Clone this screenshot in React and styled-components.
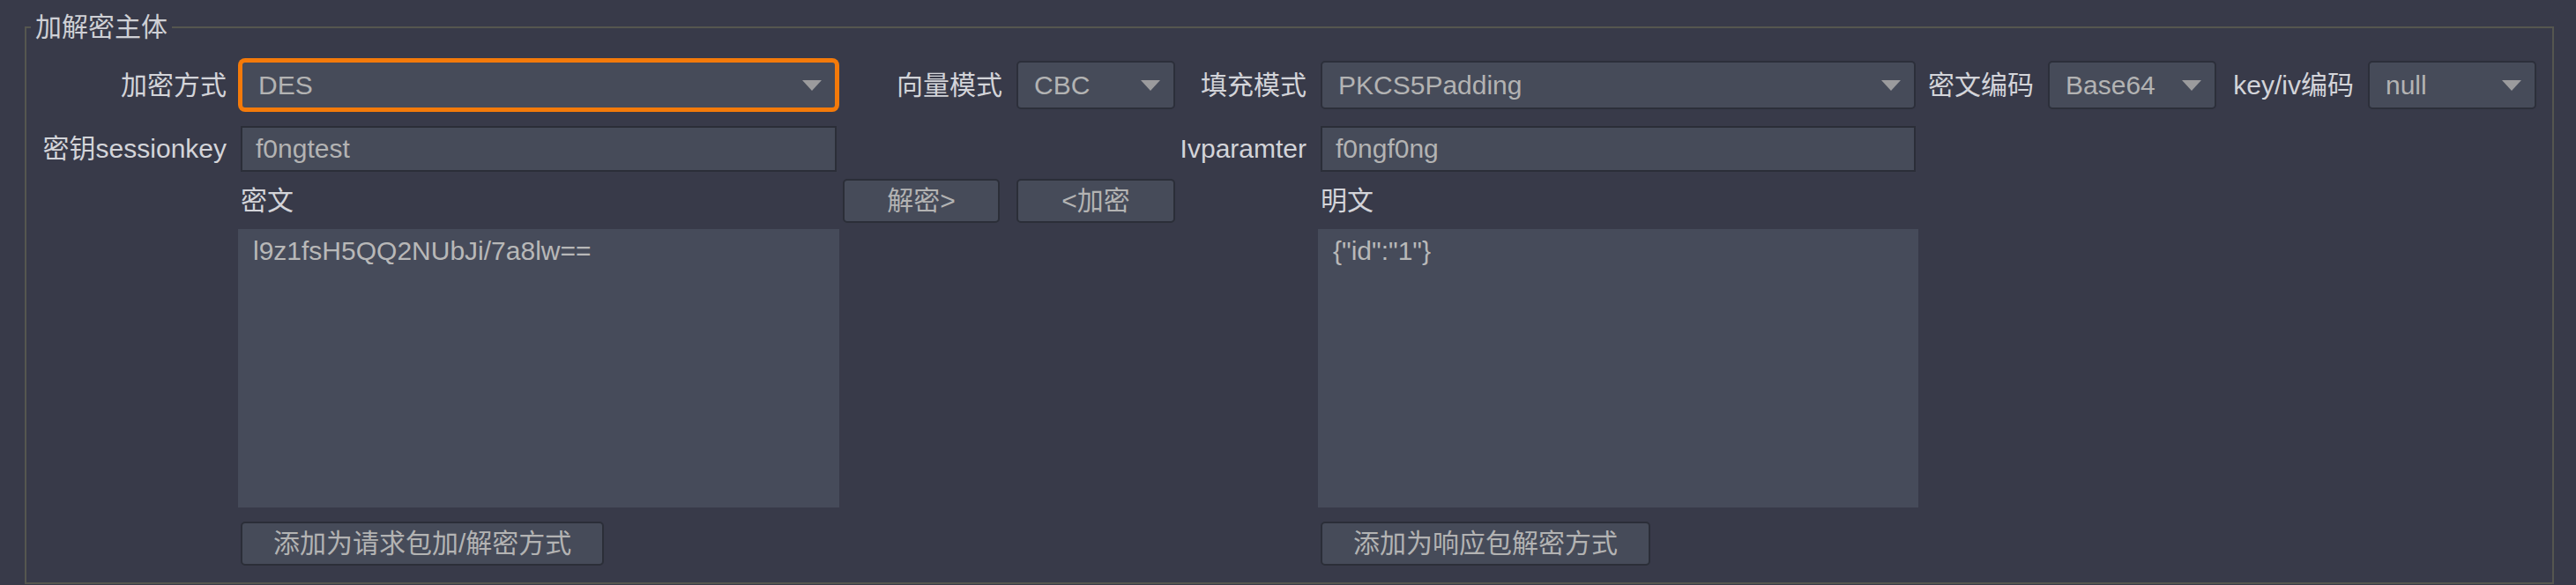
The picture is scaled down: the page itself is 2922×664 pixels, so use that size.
import React from 'react';
import styled, { createGlobalStyle, css } from 'styled-components';

const GlobalStyle = createGlobalStyle`
  html, body {
    margin: 0;
    padding: 0;
    background: #383a49;
  }
`;

const Page = styled.div`
  width: 2922px;
  height: 664px;
  overflow: hidden;
  box-sizing: border-box;
  padding: 13px 25px 0 28px;
  background: #383a49;
  font-family: 'Liberation Sans', 'Noto Sans CJK SC', sans-serif;
  font-size: 30px;
  line-height: 36px;
  color: #d3d4d9;
`;

const Frame = styled.fieldset`
  margin: 0;
  padding: 20px 0 19px 0;
  min-width: 0;
  border: 2px solid #55564f;
`;

const Title = styled.legend`
  margin-left: 5px;
  padding: 0 5px;
  color: #cfd0d5;
`;

const Form = styled.div`
  display: grid;
  grid-template-columns:
    [lab] 243px [key] 676px [mid] 7px [dec] 178px 19px [mode] 180px
    [lab2] 165px [pad] 675px [lab3] 150px [enc] 191px [lab4] 172px [kenc] 191px [end];
  grid-template-rows:
    [r1] 55px 19px [r2] 52px 8px [r3] 50px 7px [r4] 316px 16px [r5] 50px [rend];
`;

const Label = styled.span`
  grid-area: ${(p) => p.$area};
  align-self: center;
  justify-self: ${(p) => (p.$left ? 'start' : 'end')};
  padding-right: ${(p) => (p.$left ? 0 : 16)}px;
  white-space: nowrap;
  color: #d3d4d9;
`;

const Combo = styled.div`
  grid-area: ${(p) => p.$area};
  display: flex;
  align-items: center;
  justify-content: space-between;
  box-sizing: border-box;
  height: 55px;
  padding: 0 15px 0 18px;
  background: #464b59;
  border: 2px solid #2c2f3a;
  border-radius: 5px;
  color: #b3b3b3;
  white-space: nowrap;

  ${(p) =>
    p.$focused &&
    css`
      border-color: #f47a0a;
      box-shadow: 0 0 0 3px #f47a0a;
    `}
`;

const Arrow = styled.svg`
  flex: none;
  width: 22px;
  height: 12px;
`;

const TextField = styled.div`
  grid-area: ${(p) => p.$area};
  display: flex;
  align-items: center;
  box-sizing: border-box;
  height: 52px;
  padding-left: 15px;
  background: #464b59;
  border: 2px solid #2b2e38;
  color: #b3b3b3;
`;

const TextPane = styled.textarea`
  grid-area: ${(p) => p.$area};
  margin: 0 -3px;
  box-sizing: border-box;
  padding: 7px 17px;
  border: none;
  outline: none;
  resize: none;
  background: #464b5a;
  color: #b8b8b8;
  font: inherit;
  line-height: 36px;
`;

const Button = styled.button`
  grid-area: ${(p) => p.$area};
  justify-self: ${(p) => (p.$wide ? 'start' : 'stretch')};
  box-sizing: border-box;
  height: 50px;
  margin: 0;
  padding: 0 ${(p) => (p.$wide ? 35 : 0)}px;
  background: #464b59;
  border: 2px solid #2b2e38;
  border-radius: 5px;
  color: #b3b3b3;
  font: inherit;
  line-height: 36px;
  white-space: nowrap;
`;

const DropArrow = () => (
  <Arrow viewBox="0 0 22 12">
    <polygon points="0,0 22,0 11,12" fill="#9b9b9d" />
  </Arrow>
);

const Select = ({ area, value, focused }) => (
  <Combo $area={area} $focused={focused}>
    <span>{value}</span>
    <DropArrow />
  </Combo>
);

const App = () => (
  <Page>
    <GlobalStyle />
    <Frame>
      <Title>加解密主体</Title>
      <Form>
        <Label $area="r1 / lab">加密方式</Label>
        <Select area="r1 / key" value="DES" focused />
        <Label $area="r1 / mid / auto / mode">向量模式</Label>
        <Select area="r1 / mode" value="CBC" />
        <Label $area="r1 / lab2">填充模式</Label>
        <Select area="r1 / pad" value="PKCS5Padding" />
        <Label $area="r1 / lab3">密文编码</Label>
        <Select area="r1 / enc" value="Base64" />
        <Label $area="r1 / lab4">key/iv编码</Label>
        <Select area="r1 / kenc" value="null" />

        <Label $area="r2 / lab">密钥sessionkey</Label>
        <TextField $area="r2 / key">f0ngtest</TextField>
        <Label $area="r2 / lab2">Ivparamter</Label>
        <TextField $area="r2 / pad">f0ngf0ng</TextField>

        <Label $area="r3 / key" $left>密文</Label>
        <Button $area="r3 / dec">解密&gt;</Button>
        <Button $area="r3 / mode">&lt;加密</Button>
        <Label $area="r3 / pad" $left>明文</Label>

        <TextPane $area="r4 / key" readOnly value="l9z1fsH5QQ2NUbJi/7a8lw==" />
        <TextPane $area="r4 / pad" readOnly value={'{"id":"1"}'} />

        <Button $area="r5 / key" $wide>添加为请求包加/解密方式</Button>
        <Button $area="r5 / pad" $wide>添加为响应包解密方式</Button>
      </Form>
    </Frame>
  </Page>
);

export default App;
